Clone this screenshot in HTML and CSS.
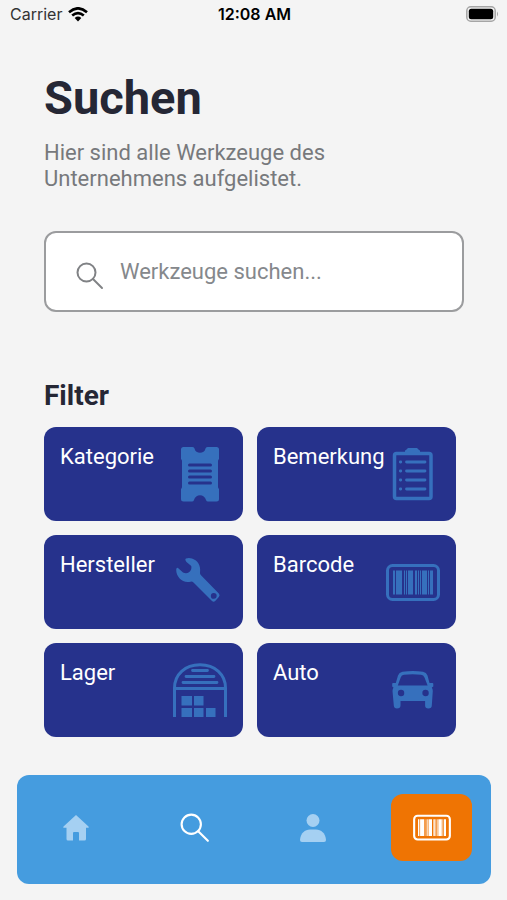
FILE: index.html
```html
<!DOCTYPE html>
<html lang="de">
<head>
  <meta charset="utf-8">
  <meta name="viewport" content="width=device-width, initial-scale=1">
  <title>Suchen</title>
  <link rel="stylesheet" href="styles.css">
</head>
<body>
  <svg class="sprite" aria-hidden="true">
    <symbol id="search" viewBox="0 0 28 28">
      <circle cx="10.500" cy="10.500" r="9"/>
      <path d="M17 17 26 26"/>
    </symbol>
    <symbol id="barcode" viewBox="0 0 56 40">
      <rect x="2.500" y="2.500" width="51" height="34" rx="5" fill="none" stroke="currentColor" stroke-width="3"/>
      <path fill="currentColor" d="M8 7.500h2v24H8zM11 7.500h6v24h-6zM19 7.500h1v24h-1zM21 7.500h1v24h-1zM23 7.500h5v24h-5zM30 7.500h2v24h-2zM33 7.500h1v24h-1zM35 7.500h1v24h-1zM37 7.500h5v24h-5zM43 7.500h1v24h-1zM45 7.500h3v24h-3z"/>
    </symbol>
  </svg>

  <header class="status">
    <span class="carrier">Carrier
      <svg width="20" height="15" viewBox="0 0 20 15" aria-hidden="true">
        <g fill="none" stroke="currentColor" stroke-width="2.600">
          <path d="M1 5.200Q10-2.600 19 5.200"/>
          <path d="M4.200 8.600Q10 3.600 15.800 8.600"/>
        </g>
        <path fill="currentColor" d="M6.700 11Q10 8.200 13.300 11L10 14.600Z"/>
      </svg>
    </span>
    <time class="clock">12:08 AM</time>
    <svg class="battery" width="33" height="16" viewBox="0 0 33 16" role="img" aria-label="Akku">
      <rect x="0.800" y="0.800" width="28.400" height="14.400" rx="4" fill="none" stroke="#a5a5a5" stroke-width="1.500"/>
      <rect x="2.800" y="2.800" width="24.400" height="10.400" rx="2.500"/>
      <path d="M31 5.500Q33 8 31 10.500Z" fill="#a5a5a5"/>
    </svg>
  </header>

  <main class="page">
    <h1>Suchen</h1>
    <p class="intro">Hier sind alle Werkzeuge des Unternehmens aufgelistet.</p>

    <label class="search">
      <svg class="search-icon" aria-hidden="true"><use href="#search"/></svg>
      <input type="search" placeholder="Werkzeuge suchen..." aria-label="Werkzeuge suchen">
    </label>

    <h2>Filter</h2>
    <div class="filters">
      <button class="card" type="button">
        <span>Kategorie</span>
        <svg viewBox="0 0 56 56" aria-hidden="true">
          <path fill="currentColor" d="M11.500 0H20.500Q22.300 0 22.500 1.500C23.500 7.300 32.500 7.300 33.500 1.500Q33.700 0 35.500 0H44.500Q47 0 47 2.500V12Q46 13 46 14V40Q46 41 47 42V52Q47 54.500 44.500 54.500H36Q34.500 54.500 34 53C32.500 46.500 23.500 46.500 22 53Q21.500 54.500 20 54.500H11.500Q9 54.500 9 52V42Q10 41 10 40V14Q10 13 9 12V2.500Q9 0 11.500 0Z"/>
          <path class="cut" stroke-width="3" stroke-linecap="round" d="M17.500 18h21M17.500 24h21M17.500 30h21M17.500 36h21"/>
        </svg>
      </button>
      <button class="card" type="button">
        <span>Bemerkung</span>
        <svg viewBox="0 0 56 56" aria-hidden="true">
          <rect x="9.500" y="6.500" width="36.500" height="45" rx="2" fill="none" stroke="currentColor" stroke-width="3.500"/>
          <path fill="currentColor" d="M20 7V4q0-1 1-1l2-2h9l2 2q1 0 1 1v3Z"/>
          <g stroke="currentColor" stroke-width="2.800" stroke-linecap="round">
            <path d="M21.500 15H40M21.500 24H40M21.500 33H40M21.500 42H40"/>
            <path d="M15.300 15h.5M15.300 24h.5M15.300 33h.5M15.300 42h.5"/>
          </g>
        </svg>
      </button>
      <button class="card" type="button">
        <span>Hersteller</span>
        <svg viewBox="0 0 56 56" aria-hidden="true">
          <path fill="currentColor" fill-rule="evenodd" d="M14 3.500Q17 2.600 20 3.600C26 5.500 29 11 28 17.500Q27.800 19 29 20.300L46.800 38.500q1.600 1.700 0 3.400l-3.600 4q-1.600 1.600-3.200 0L21.500 27.500q-1.300-1.200-3-.8C10.500 28.500 4 22 4.200 14.500Q4.500 12 6 13l5 4.600q3.500 1.200 6-.3 3-2.300 2.300-6.300L14.500 7Q12.500 4.500 14 3.500ZM41.700 38a2.900 2.900 0 1 0 .1 5.800 2.900 2.900 0 0 0-.1-5.800Z"/>
        </svg>
      </button>
      <button class="card" type="button">
        <span>Barcode</span>
        <svg aria-hidden="true"><use href="#barcode"/></svg>
      </button>
      <button class="card" type="button">
        <span>Lager</span>
        <svg viewBox="0 0 56 56" aria-hidden="true">
          <g fill="none" stroke="currentColor" stroke-width="3">
            <path d="M2.500 54V25C2.500 11.500 13 1.800 28 1.800S53.500 11.500 53.500 25V54M2.500 25.500h51"/>
            <path stroke-width="2.800" stroke-linecap="round" d="M20.500 7.500h15M14 13.500h28M11 19.500h34"/>
          </g>
          <path fill="currentColor" d="M9.500 33h10.500v9.500H9.500zM22 33h9.500v9.500H22zM9.500 45h10.500v9H9.500zM22 45h9.500v9H22zM34 45h9.500v9h-9.500z"/>
        </svg>
      </button>
      <button class="card" type="button">
        <span>Auto</span>
        <svg viewBox="0 0 56 56" aria-hidden="true">
          <path fill="currentColor" fill-rule="evenodd" d="M17.500 8.800Q28 7.200 38 8.800 41.500 9.500 42.500 12.500L44.500 20h3q.8 0 .8 1v2.500l-1.500 1q1 1.500 1 3.500l-1 14.500q0 3-3.500 3-3.200 0-3.200-3V38H15.500v4.500q0 3-3.500 3-3 0-3.200-3L7.500 28q0-2 1-3.500l-1.300-1V21q0-1 .8-1h2.800L13 12.500Q14 9.500 17.500 8.800ZM19 11.800Q16.500 12 15.700 14.500L12.800 22.500H42.600L39.500 14.500Q38.500 12 36 11.800 27.500 10.800 19 11.800ZM16 26.800a3.200 3.200 0 1 0 .1 6.400 3.200 3.200 0 0 0-.1-6.400ZM40.500 26.800a3.200 3.200 0 1 0 .1 6.400 3.200 3.200 0 0 0-.1-6.400Z"/>
        </svg>
      </button>
    </div>
  </main>

  <nav class="tabs" aria-label="Hauptnavigation">
    <a class="tab" href="#start" aria-label="Start">
      <svg width="28" height="28" viewBox="0 0 28 28" aria-hidden="true"><path fill="currentColor" d="M14 1 26.500 12.500q1 1.200-.5 1.200H24V25q0 1.500-1.500 1.500H17V19q0-1-1-1h-4q-1 0-1 1v7.500H6Q4.500 26.500 4.500 25V13.700H2q-1.500 0-.5-1.200Z"/></svg>
    </a>
    <a class="tab active" href="#suchen" aria-label="Suchen" aria-current="page">
      <svg class="tab-search" aria-hidden="true"><use href="#search"/></svg>
    </a>
    <a class="tab" href="#profil" aria-label="Profil">
      <svg width="28" height="30" viewBox="0 0 28 30" aria-hidden="true"><circle cx="14" cy="7.500" r="6.500" fill="currentColor"/><path fill="currentColor" d="M1 27C1.500 20 6 16.500 11 16.500h6C22 16.500 26.500 20 27 27q0 2-2 2H3q-2 0-2-2Z"/></svg>
    </a>
    <a class="tab active" href="#scannen" aria-label="Barcode scannen">
      <span class="scan"><svg width="40" height="28" aria-hidden="true"><use href="#barcode"/></svg></span>
    </a>
  </nav>
</body>
</html>
```
FILE: styles.css
```css
* {
  box-sizing: border-box;
}

body {
  margin: 0;
  min-height: 100vh;
  display: flex;
  flex-direction: column;
  background: #f4f4f4;
  color: #252735;
  font-family: Roboto, "Liberation Sans", sans-serif;
}

.sprite {
  display: none;
}

.status {
  display: grid;
  grid-template-columns: 1fr auto 1fr;
  align-items: center;
  height: 28px;
  padding: 0 8px 0 10px;
  color: #000;
  font: 16px/28px Inter, sans-serif;
}

.carrier {
  display: flex;
  align-items: center;
  gap: 6px;
  color: #333;
}

.carrier svg {
  color: #000;
}

.clock {
  font-weight: 600;
}

.battery {
  justify-self: end;
}

.page {
  padding: 40px 43px 0 44px;
}

h1 {
  margin: 0;
  font-size: 47px;
  line-height: 60px;
}

.intro {
  max-width: 320px;
  margin: 12px 0 39px;
  color: #77797c;
  font-size: 22px;
  line-height: 26px;
}

.search {
  display: flex;
  align-items: center;
  gap: 16px;
  height: 81px;
  padding: 0 30px;
  border: 2px solid #9b9c9e;
  border-radius: 12px;
  background: #fff;
}

.search-icon {
  flex: none;
  width: 28px;
  height: 28px;
  margin-top: 8px;
  fill: none;
  stroke: #808285;
  stroke-width: 2;
  stroke-linecap: round;
}

.search input {
  flex: 1;
  min-width: 0;
  padding: 0;
  border: 0;
  outline: 0;
  background: none;
  color: #252735;
  font: 22px/28px Roboto, sans-serif;
}

.search input::placeholder {
  color: #85888c;
}

h2 {
  margin: 67px 0 14px;
  font-size: 28px;
  line-height: 34px;
}

.filters {
  display: grid;
  grid-template-columns: 1fr 1fr;
  gap: 14px;
  margin-right: 8px;
}

.card {
  display: flex;
  justify-content: space-between;
  align-items: flex-start;
  height: 94px;
  padding: 16px 15px 0 16px;
  border: 0;
  border-radius: 12px;
  background: #26328c;
  color: #fff;
  font: 22px/28px Roboto, sans-serif;
}

.card svg {
  flex: none;
  width: 56px;
  height: 56px;
  margin: 4px 0 0 -4px;
  color: #3670bd;
}

.cut {
  stroke: #26328c;
}

.tabs {
  display: grid;
  grid-template-columns: repeat(4, 1fr);
  height: 109px;
  margin: 38px 16px 16px 17px;
  padding: 19px 0 23px;
  border-radius: 12px;
  background: #459cdf;
}

.tab {
  display: grid;
  place-items: center;
  color: #a5d0f2;
}

.tab.active {
  color: #fff;
}

.tab-search {
  width: 30px;
  height: 30px;
  fill: none;
  stroke: currentColor;
  stroke-width: 2;
  stroke-linecap: round;
}

.scan {
  display: grid;
  place-items: center;
  width: 81px;
  height: 67px;
  border-radius: 12px;
  background: #ef7403;
}
```
